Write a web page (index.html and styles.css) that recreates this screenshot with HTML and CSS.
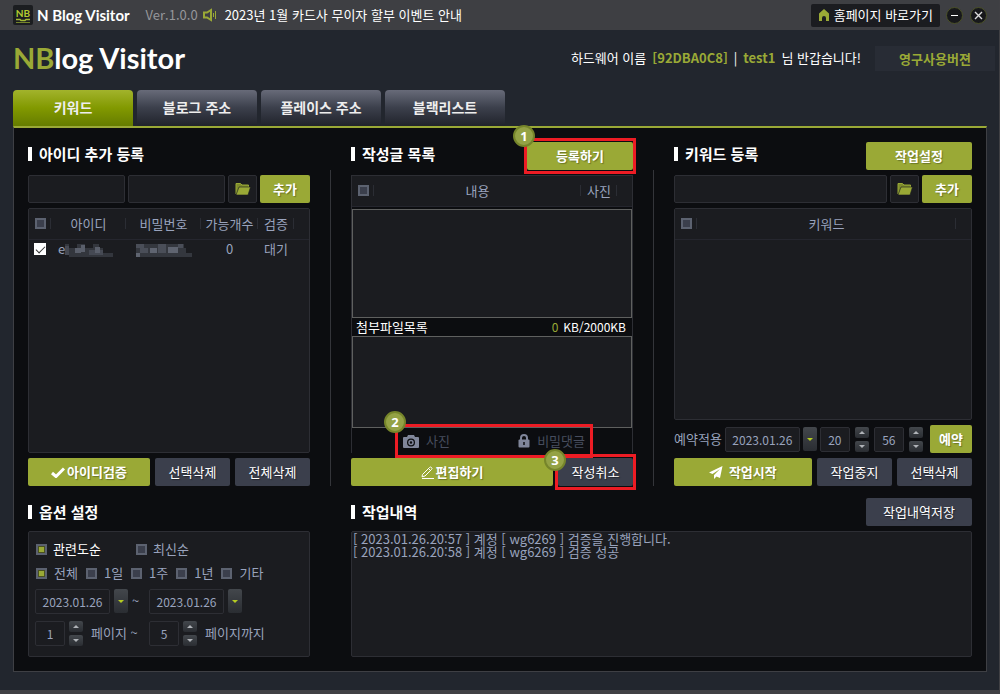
FILE: index.html
```html
<!DOCTYPE html>
<html lang="ko">
<head>
    <meta charset="UTF-8">
    <meta name="viewport" content="width=device-width, initial-scale=1.0">
    <title>N Blog Visitor</title>
    <link rel="stylesheet" href="styles.css">
</head>
<body>
    <div class="titlebar">
        <svg class="app-icon" width="20" height="20" viewBox="0 0 20 20">
            <rect width="20" height="20" rx="2" fill="#1b1d20"/>
            <text class="app-mark" x="10" y="12" text-anchor="middle" fill="#b2cc2f">NB</text>
            <path d="M3 14.500h4l1 1h4l1-1h4" fill="none" stroke="#a4bb34" stroke-width="1.500"/>
            <path d="M3 17.500h14" stroke="#74842b"/>
        </svg>
        <span class="app-name">N Blog Visitor</span>
        <span class="version">Ver.1.0.0</span>
        <svg class="speaker" width="14" height="14" viewBox="0 0 14 14" fill="none" stroke="#9aa936" stroke-width="2">
            <path d="M1 4.500h3l4-2.500v10L4 9.500H1z"/>
            <path d="M10.500 5v4M12.500 3v8" stroke-width="1"/>
        </svg>
        <a class="notice" href="#">2023년 1월 카드사 무이자 할부 이벤트 안내</a>
        <a class="home-link" href="#">
            <svg width="12" height="12" viewBox="0 0 12 12" fill="#9aa936"><path d="M6 0 11 4.500V12H8V9a2 2 0 0 0-4 0v3H1V4.500z"/></svg>
            홈페이지 바로가기
        </a>
        <button class="win-btn" aria-label="최소화"><svg width="9" height="9" viewBox="0 0 9 9"><path d="M1 4.500h7" stroke="#fff" stroke-width="1"/></svg></button>
        <button class="win-btn" aria-label="닫기"><svg width="9" height="9" viewBox="0 0 9 9"><path d="M1 1l7 7M8 1L1 8" stroke="#ddd" stroke-width="1.400"/></svg></button>
    </div>

    <header class="header">
        <h1 class="logo"><span class="green">NB</span>log Visitor</h1>
        <p class="welcome"><span>하드웨어 이름</span><b class="green">[92DBA0C8]</b><span>|</span><b class="green">test1</b><span>님 반갑습니다!</span></p>
        <span class="license">영구사용버젼</span>
    </header>

    <nav class="tabs">
        <button class="tab active">키워드</button>
        <button class="tab">블로그 주소</button>
        <button class="tab">플레이스 주소</button>
        <button class="tab">블랙리스트</button>
    </nav>

    <main class="panel">
        <div class="top">
            <section class="column">
                <div class="head"><h2>아이디 추가 등록</h2></div>
                <div class="row">
                    <input class="field" type="text" aria-label="아이디">
                    <input class="field" type="text" aria-label="비밀번호">
                    <button class="folder" aria-label="파일 열기">
                        <svg width="16" height="14" viewBox="0 0 16 14"><path d="M1 12V1.500h4.500L7 3h6.500v2" fill="#7f8c2c" stroke="#9aa936"/><path d="M4 5h11.500L13 13H1z" fill="#9aa936" stroke="#1b1c20" stroke-width=".6"/></svg>
                    </button>
                    <button class="btn green-btn add">추가</button>
                </div>
                <div class="box list">
                    <table class="accounts">
                        <thead>
                            <tr>
                                <th class="c-check"><input type="checkbox" class="tick" aria-label="전체 선택"></th>
                                <th class="c-id">아이디</th>
                                <th class="c-pw">비밀번호</th>
                                <th class="c-count">가능개수</th>
                                <th class="c-state">검증</th>
                                <th class="c-end"></th>
                            </tr>
                        </thead>
                        <tbody>
                            <tr>
                                <td class="c-check"><input type="checkbox" class="tick white" aria-label="계정 선택" checked></td>
                                <td class="left">e<svg class="mosaic" width="48" height="13" viewBox="0 0 48 13" shape-rendering="crispEdges">
                                    <path d="M0 0h4v4h-4zM12 0h8v4h-8zM28 0h6v4h-6zM0 4h38v5h-38zM4 9h44v4h-44z" fill="#33363d"/>
                                    <path d="M0 2h4v9h-4zM24 6h14v5h-14z" fill="#454953"/>
                                    <path d="M10 4h6v5h-6zM16 1h4v7h-4zM30 3h5v6h-5z" fill="#5a5f6b"/>
                                </svg></td>
                                <td><svg class="mosaic" width="56" height="13" viewBox="0 0 56 13" shape-rendering="crispEdges">
                                    <path d="M0 0h48v4h-48zM0 4h50v5h-50zM0 9h56v4h-56z" fill="#34373e"/>
                                    <path d="M0 0h8v4h-8zM4 4h8v5h-8zM22 0h8v9h-8zM42 0h5v4h-5z" fill="#4a4e58"/>
                                    <path d="M14 4h7v5h-7zM32 3h10v6h-10zM0 9h4v4h-4z" fill="#5f6470"/>
                                </svg></td>
                                <td>0</td>
                                <td>대기</td>
                                <td></td>
                            </tr>
                        </tbody>
                    </table>
                </div>
                <div class="row actions">
                    <button class="btn green-btn wide"><svg width="14" height="11" viewBox="0 0 14 11"><path d="M1 6l4 3.500L13 1.500" fill="none" stroke="#fff" stroke-width="3"/></svg>아이디검증</button>
                    <button class="btn">선택삭제</button>
                    <button class="btn">전체삭제</button>
                </div>
            </section>

            <div class="divider"></div>

            <section class="column">
                <div class="head">
                    <h2>작성글 목록</h2>
                    <div class="mark"><button class="btn green-btn long">등록하기</button><span class="step">1</span></div>
                </div>
                <div class="posts">
                    <table>
                        <thead>
                            <tr>
                                <th class="c-check"><input type="checkbox" class="tick" aria-label="글 전체 선택"></th>
                                <th>내용</th>
                                <th class="c-photo">사진</th>
                                <th class="c-end"></th>
                            </tr>
                        </thead>
                    </table>
                    <textarea class="post-text" aria-label="내용"></textarea>
                    <div class="files-head"><span>첨부파일목록</span><span class="size"><span class="green">0</span><span>KB/2000KB</span></span></div>
                    <textarea class="files" aria-label="첨부파일목록"></textarea>
                    <div class="attach">
                        <div class="mark attach-mark">
                            <button class="attach-btn">
                                <svg width="16" height="13" viewBox="0 0 16 13"><path fill-rule="evenodd" d="M5 0h6l1 2h3q1 0 1 1v9q0 1-1 1H1q-1 0-1-1V3q0-1 1-1h3zM8 3.500a4 4 0 1 0 0 8 4 4 0 0 0 0-8z" fill="#80869a"/><circle cx="8" cy="7.500" r="2" fill="none" stroke="#80869a" stroke-width="1.500"/></svg>
                                사진
                            </button>
                            <button class="attach-btn">
                                <svg width="12" height="14" viewBox="0 0 12 14"><path d="M3 7V4a3 3 0 0 1 6 0v3" fill="none" stroke="#80869a" stroke-width="2"/><rect x=".5" y="5.500" width="11" height="8" rx="1" fill="#80869a"/><path d="M6 8v3" stroke="#0c0d10" stroke-width="1.500"/></svg>
                                비밀댓글
                            </button>
                            <span class="step">2</span>
                        </div>
                    </div>
                </div>
                <div class="row actions">
                    <button class="btn green-btn wide"><svg width="13" height="13" viewBox="0 0 13 13" fill="none" stroke="#fff"><path d="M1.500 8.500L8.500 1.500q1-1 2 0t0 2L4 10l-3 .8zM7.500 2.500l2.500 2.500M1 12.500h12"/></svg>편집하기</button>
                    <div class="mark cancel-mark"><button class="btn">작성취소</button><span class="step">3</span></div>
                </div>
            </section>

            <div class="divider"></div>

            <section class="column">
                <div class="head">
                    <h2>키워드 등록</h2>
                    <button class="btn green-btn long">작업설정</button>
                </div>
                <div class="row">
                    <input class="field" type="text" aria-label="키워드">
                    <button class="folder" aria-label="키워드 파일 열기">
                        <svg width="16" height="14" viewBox="0 0 16 14"><path d="M1 12V1.500h4.500L7 3h6.500v2" fill="#7f8c2c" stroke="#9aa936"/><path d="M4 5h11.500L13 13H1z" fill="#9aa936" stroke="#1b1c20" stroke-width=".6"/></svg>
                    </button>
                    <button class="btn green-btn add">추가</button>
                </div>
                <div class="box list">
                    <table>
                        <thead>
                            <tr>
                                <th class="c-check"><input type="checkbox" class="tick" aria-label="키워드 전체 선택"></th>
                                <th>키워드</th>
                                <th class="c-end"></th>
                            </tr>
                        </thead>
                    </table>
                </div>
                <div class="row reserve">
                    <label for="reserve-date">예약적용</label>
                    <input class="field date" id="reserve-date" type="text" value="2023.01.26">
                    <button class="drop" aria-label="날짜 선택"></button>
                    <input class="field num" type="text" value="20" aria-label="시">
                    <span class="spin"><button class="up" aria-label="시 증가"></button><button class="down" aria-label="시 감소"></button></span>
                    <input class="field num" type="text" value="56" aria-label="분">
                    <span class="spin"><button class="up" aria-label="분 증가"></button><button class="down" aria-label="분 감소"></button></span>
                    <button class="btn green-btn reserve-btn">예약</button>
                </div>
                <div class="row actions">
                    <button class="btn green-btn wide"><svg width="14" height="13" viewBox="0 0 14 13" fill="#fff"><path d="M13.500 0L0 6.500l3.500 1.600L11 3 5 9v4l2.500-2.600 3.500 1.600z"/></svg>&nbsp;작업시작</button>
                    <button class="btn">작업중지</button>
                    <button class="btn">선택삭제</button>
                </div>
            </section>
        </div>

        <div class="bottom">
            <section class="column">
                <div class="head"><h2>옵션 설정</h2></div>
                <div class="box options">
                    <div class="sort">
                        <label class="on"><input type="radio" name="sort" class="tick" checked>관련도순</label>
                        <label><input type="radio" name="sort" class="tick">최신순</label>
                    </div>
                    <div class="period">
                        <label><input type="radio" name="period" class="tick" checked>전체</label>
                        <label><input type="radio" name="period" class="tick">1일</label>
                        <label><input type="radio" name="period" class="tick">1주</label>
                        <label><input type="radio" name="period" class="tick">1년</label>
                        <label><input type="radio" name="period" class="tick">기타</label>
                    </div>
                    <div class="range">
                        <div class="part">
                            <input class="field date" type="text" value="2023.01.26" aria-label="시작일">
                            <button class="drop" aria-label="시작일 선택"></button>
                            <span>~</span>
                        </div>
                        <div class="part">
                            <input class="field date" type="text" value="2023.01.26" aria-label="종료일">
                            <button class="drop" aria-label="종료일 선택"></button>
                        </div>
                    </div>
                    <div class="range">
                        <div class="part">
                            <input class="field num" id="page-from" type="text" value="1">
                            <span class="spin"><button class="up" aria-label="시작 페이지 증가"></button><button class="down" aria-label="시작 페이지 감소"></button></span>
                            <label for="page-from">페이지 ~</label>
                        </div>
                        <div class="part">
                            <input class="field num" id="page-to" type="text" value="5">
                            <span class="spin"><button class="up" aria-label="끝 페이지 증가"></button><button class="down" aria-label="끝 페이지 감소"></button></span>
                            <label for="page-to">페이지까지</label>
                        </div>
                    </div>
                </div>
            </section>

            <section class="column">
                <div class="head">
                    <h2>작업내역</h2>
                    <button class="btn long">작업내역저장</button>
                </div>
                <div class="box log">
                    <p>[ 2023.01.26.20:57 ] 계정 [ wg6269 ] 검증을 진행합니다.</p>
                    <p>[ 2023.01.26.20:58 ] 계정 [ wg6269 ] 검증 성공</p>
                </div>
            </section>
        </div>
    </main>
</body>
</html>
```

FILE: styles.css
```css
* {
    margin: 0;
    padding: 0;
    box-sizing: border-box;
}

body {
    background: #22262e;
    color: #fff;
    font: 13px/16px "Noto Sans CJK KR", sans-serif;
    min-height: 100vh;
    display: flex;
    flex-direction: column;
    border-right: 1px solid #404044;
    border-bottom: 4px solid #404044;
}

button,
input,
textarea {
    font: inherit;
    color: inherit;
    border: none;
    outline: none;
}

button {
    cursor: pointer;
}

a {
    color: #fff;
    text-decoration: none;
}

.green {
    color: #9aa936;
}

/* title bar */
.titlebar {
    display: flex;
    align-items: center;
    height: 30px;
    padding: 0 12px 0 13px;
    background: #3e3f43;
}

.app-mark {
    font: bold 10px Lato, sans-serif;
}

.app-name {
    margin-left: 4px;
    font: bold 15px/20px Lato, sans-serif;
}

.version {
    margin-left: 16px;
    color: #96979b;
}

.speaker {
    margin: 0 8px 0 5px;
}

.home-link {
    display: flex;
    align-items: center;
    gap: 4px;
    height: 23px;
    margin-left: auto;
    margin-right: 6px;
    padding: 0 7px;
    background: #1b1c20;
    border-radius: 2px;
}

.win-btn {
    display: flex;
    align-items: center;
    justify-content: center;
    width: 17px;
    height: 17px;
    border: 1px solid #4b5128;
    border-radius: 50%;
    background: #17181b;
}

.win-btn + .win-btn {
    margin-left: 7px;
}

/* header */
.header {
    display: flex;
    align-items: center;
    height: 60px;
    padding: 0 4px 4px 13px;
}

.logo {
    font: bold 29px/36px Lato, sans-serif;
    margin-right: auto;
}

.welcome {
    display: flex;
    gap: 6px;
}

.license {
    width: 120px;
    margin-left: 14px;
    line-height: 25px;
    text-align: center;
    font-weight: bold;
    color: #9aa936;
    background: #282c35;
}

/* tabs */
.tabs {
    display: flex;
    gap: 4px;
    height: 36px;
    margin: 0 13px;
}

.tab {
    width: 120px;
    padding-bottom: 2px;
    border-radius: 4px 4px 0 0;
    background: linear-gradient(#686b79, #3b3f4b 50%, #20232b);
    color: #eee;
    font-size: 14px;
    font-weight: bold;
}

.tab.active {
    background: linear-gradient(#a2b32c, #829900 50%, #657c00);
}

/* main panel */
.panel {
    flex: 1;
    margin: 0 12px 18px 13px;
    padding: 14px;
    border: 1px solid #3e3f44;
    border-top: 2px solid #9aa936;
    background: #0c0d10;
}

.top {
    display: grid;
    grid-template-columns: 282fr 41px 282fr 41px 298fr;
    height: 344px;
}

.bottom {
    display: grid;
    grid-template-columns: 282fr 621fr;
    gap: 41px;
    margin-top: 12px;
}

.column {
    display: flex;
    flex-direction: column;
    gap: 5px;
    min-width: 0;
}

.divider {
    width: 1px;
    margin: 28px auto 0;
    background: #34353a;
}

.head {
    display: flex;
    align-items: center;
    justify-content: space-between;
    height: 28px;
}

h2 {
    display: flex;
    align-items: center;
    gap: 7px;
    font-size: 15px;
    line-height: 20px;
}

.top h2 {
    padding-bottom: 4px;
}

h2::before {
    content: "";
    width: 4px;
    height: 14px;
    background: #fff;
}

.row {
    display: flex;
    align-items: center;
    gap: 3px;
    height: 28px;
}

.actions {
    gap: 5px;
}

.field {
    flex: 1;
    min-width: 0;
    height: 28px;
    border: 1px solid #2d2e34;
    border-radius: 2px;
    background: #1b1c20;
    color: #99a3bd;
}

.field.date,
.field.num {
    flex: none;
    width: 75px;
    height: 25px;
    text-align: center;
    font-size: 12px;
}

.field.num {
    width: 30px;
}

.folder {
    display: flex;
    align-items: center;
    justify-content: center;
    width: 29px;
    height: 28px;
    border: 1px solid #2d2e34;
    border-radius: 2px;
    background: #1b1c20;
}

.btn {
    display: flex;
    align-items: center;
    justify-content: center;
    gap: 2px;
    width: 75px;
    height: 28px;
    border-radius: 2px;
    background: #3b3f4c;
    color: #fff;
    text-shadow: 1px 1px 1px #22242b;
    white-space: nowrap;
}

.green-btn {
    background: #9aa936;
    font-weight: bold;
    text-shadow: 1px 1px 1px #6b7626;
}

.btn.add {
    width: 50px;
}

.btn.long {
    width: 106px;
}

.btn.wide {
    flex: 1;
}

.btn.reserve-btn {
    width: 42px;
}

.box {
    border: 1px solid #2d2e34;
    border-radius: 2px;
    background: #1b1c20;
    color: #99a3bd;
}

.list {
    flex: 1;
}

/* list tables */
table {
    width: 100%;
    table-layout: fixed;
    border-collapse: collapse;
    background: #1b1c20;
    color: #99a3bd;
}

th {
    height: 30px;
    border-bottom: 1px solid #25262e;
    background: linear-gradient(#2b2d34, #2b2d34) no-repeat right center / 1px 11px;
    font-weight: normal;
    white-space: nowrap;
}

td {
    height: 20px;
    text-align: center;
}

td.left {
    padding-left: 7px;
    text-align: left;
}

.c-check {
    width: 22px;
}

.c-id,
.c-pw {
    width: 75px;
}

.c-count {
    width: 57px;
}

.c-state,
.c-photo {
    width: 36px;
}

th.c-end {
    width: 15px;
    background: none;
}

.mosaic {
    vertical-align: middle;
}

/* check boxes and radios share one square look */
.tick {
    display: block;
    flex: none;
    appearance: none;
    width: 11px;
    height: 11px;
    border: 2px solid #5c6270;
    background: #3b3f4c;
}

.c-check .tick {
    margin: 0 auto;
}

.tick:checked {
    border-color: #5c6270;
    background: #9aa936;
    box-shadow: inset 0 0 0 1px #4a5120;
}

.tick.white {
    width: 12px;
    height: 12px;
    border: none;
    box-shadow: none;
    background: #fff;
}

.tick.white::before {
    content: "";
    display: block;
    width: 8px;
    height: 4px;
    margin: 3px 2px;
    border: solid #333;
    border-width: 0 0 1px 1px;
    transform: rotate(-45deg);
}

/* post list */
.posts {
    flex: 1;
    display: flex;
    flex-direction: column;
    border: 1px solid #2d2e34;
    border-bottom: none;
}

textarea {
    display: block;
    width: 100%;
    resize: none;
    border: 1px solid #5f605f;
    background: #1b1c20;
}

.post-text {
    height: 109px;
    margin-top: 2px;
}

.files {
    flex: 1;
}

.files-head {
    display: flex;
    justify-content: space-between;
    padding: 0 6px 0 4px;
    line-height: 18px;
}

.size {
    display: flex;
    gap: 5px;
    font-size: 12px;
}

.attach {
    height: 25px;
    padding: 0 42px 0 46px;
}

.attach-mark {
    display: flex;
    justify-content: space-between;
    height: 26px;
    padding: 0 5px;
}

.attach-btn {
    display: flex;
    align-items: center;
    gap: 7px;
    background: none;
    color: #474d5e;
}

/* red frames with step numbers */
.mark {
    position: relative;
}

.mark::after {
    content: "";
    position: absolute;
    inset: -4px -3px;
    border: 3px solid #ed1c24;
    pointer-events: none;
}

.step {
    position: absolute;
    z-index: 1;
    top: -17px;
    left: -14px;
    width: 22px;
    height: 22px;
    border: 2px solid #76852a;
    border-radius: 50%;
    background: #94a245;
    text-align: center;
    font: bold 13px/18px "Noto Sans", sans-serif;
}

.cancel-mark .step {
    top: -9px;
}

/* date and number controls */
.drop,
.spin button {
    display: flex;
    align-items: center;
    justify-content: center;
    width: 14px;
    height: 24px;
    border-radius: 2px;
    background: linear-gradient(#43474c, #2a2d32);
}

.spin {
    display: flex;
    flex-direction: column;
    gap: 3px;
}

.spin button {
    height: 11px;
}

.drop::before,
.down::before,
.up::before {
    content: "";
    border: 3px solid transparent;
    border-top-color: #b0b3b8;
    border-bottom: none;
}

.drop::before {
    border-top-color: #b5cc22;
}

.up::before {
    border-top: none;
    border-bottom: 3px solid #b0b3b8;
}

.reserve {
    color: #99a3bd;
}

.reserve .spin {
    margin: 0 2px;
}

.reserve-btn {
    margin-left: auto;
}

/* options */
.options {
    height: 126px;
    padding: 5px 6px;
}

.options label,
.sort,
.period,
.range,
.part {
    display: flex;
    align-items: center;
}

.options .on {
    color: #fff;
}

.sort,
.period {
    height: 24px;
    padding-left: 1px;
}

.sort label {
    gap: 6px;
    width: 100px;
}

.period {
    gap: 8px;
}

.period label {
    gap: 7px;
}

.range {
    height: 32px;
}

.part {
    gap: 4px;
    width: 114px;
    white-space: nowrap;
}

.part label {
    padding-left: 4px;
}

/* log */
.log {
    flex: 1;
    padding-left: 1px;
    line-height: 13px;
}
```
